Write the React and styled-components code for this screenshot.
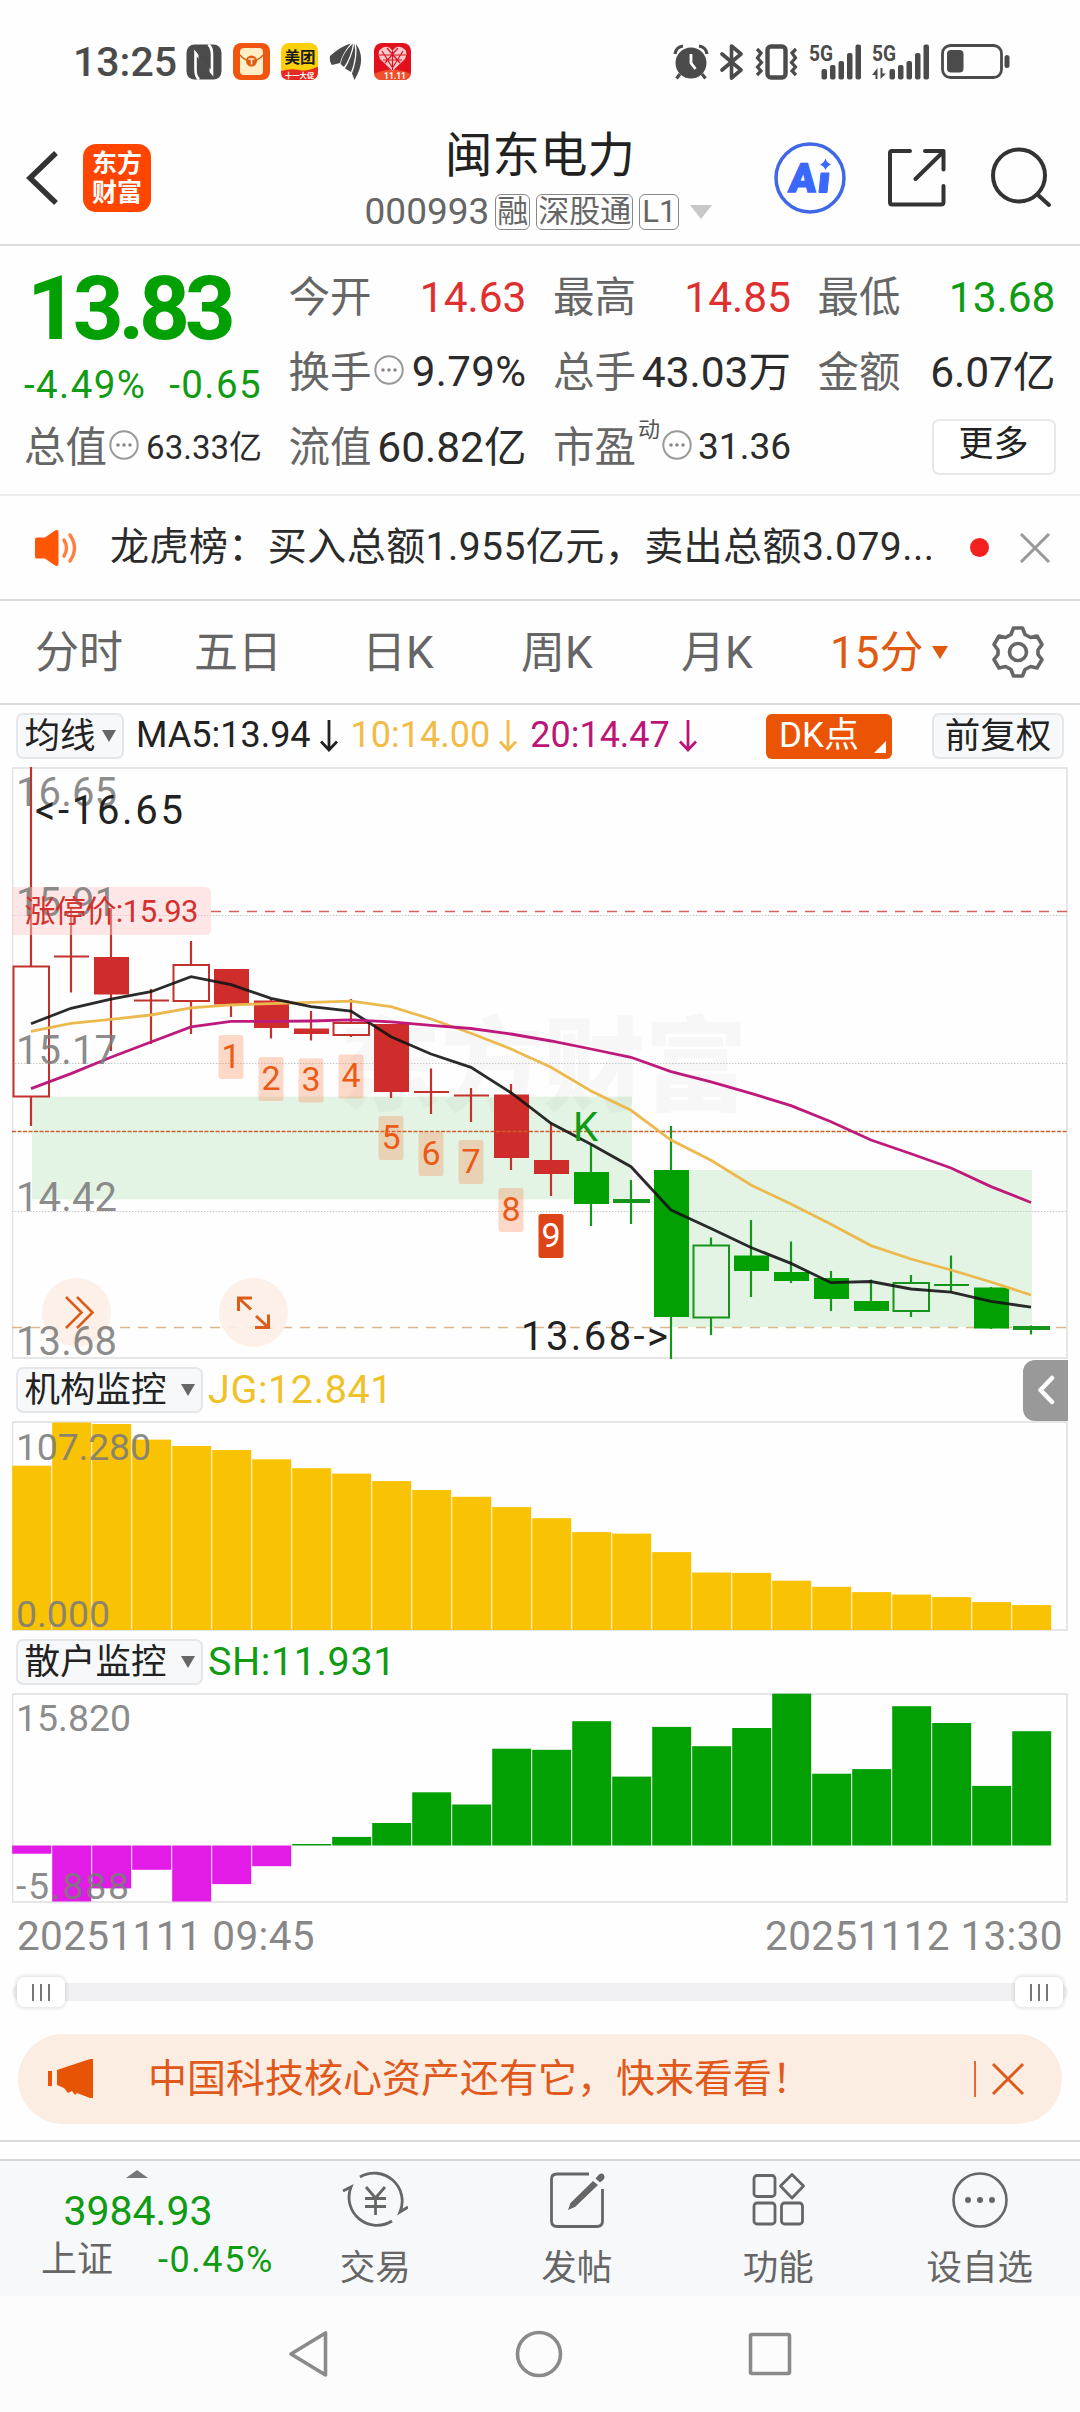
import React from 'react'
import styled, { createGlobalStyle } from 'styled-components'

const GREEN = '#02a002'
const RED = '#cf2d2b'

const PITCH = 40
const FIRST_X = 19

// o: hollow, f: filled, c: cross, k: thick cross -> [type, color, high, top, bottom, low]
const candles = [
    ['o', 'r', 0, 199.5, 329.5, 359],
    ['c', 'r', 141, 189.5, 189.5, 225.5],
    ['f', 'r', 141, 190, 227.5, 284],
    ['c', 'r', 222, 233.5, 233.5, 277],
    ['o', 'r', 174, 198, 234, 267],
    ['f', 'r', 202, 202, 237.5, 250],
    ['f', 'r', 232, 233.5, 261, 271.5],
    ['f', 'r', 244, 261.5, 267, 273.5],
    ['o', 'r', 232, 256, 268, 270],
    ['f', 'r', 257, 257, 325, 331],
    ['c', 'r', 301.5, 325, 325, 347],
    ['c', 'r', 321, 328.5, 328.5, 355],
    ['f', 'r', 317, 327.5, 391, 403],
    ['f', 'r', 356, 393, 407, 429],
    ['f', 'g', 378, 405, 437, 459],
    ['k', 'g', 413, 434, 434, 457],
    ['f', 'g', 359, 403, 550, 592],
    ['o', 'g', 470.5, 478.5, 550.5, 568],
    ['f', 'g', 453, 488.5, 504, 530],
    ['f', 'g', 474.5, 505, 514, 516],
    ['f', 'g', 504, 511, 532, 544],
    ['f', 'g', 512.5, 534, 544, 544],
    ['o', 'g', 508, 516, 544, 550],
    ['c', 'g', 488.5, 518, 518, 525],
    ['f', 'g', 520, 520.5, 561.5, 562],
    ['k', 'g', 558.5, 561, 561, 567.5],
]

const averages = [
    { color: '#ecb94f', points: [264.3, 256.3, 252.4, 248, 240.9, 237.8, 236.6, 235.4, 234.2, 239.7, 252, 266.2, 282, 300.3, 324, 343.3, 373, 393.2, 418, 437, 457.2, 478.6, 492, 503, 515, 528] },
    { color: 'rgba(20, 20, 20, 0.9)', points: [256.7, 241.3, 232.2, 224.7, 209.7, 217.6, 231.4, 239.7, 244.1, 269.7, 287, 300.3, 325.7, 356.3, 377.3, 399.7, 443, 461.6, 480.5, 496.4, 515.7, 514.5, 522, 525.2, 534.3, 540.2] },
    { color: '#be1a7c', points: [321.6, 306.6, 290.3, 275, 259.9, 254.4, 254.4, 254, 252.8, 254.8, 258.3, 261.5, 267, 274, 282, 290.3, 304.6, 314.9, 326.3, 338.6, 354.8, 373, 386.8, 401, 419.6, 435.5] },
]

const counts = [268, 290, 291.5, 287.5, 349, 365, 373, 421, 447]

const jgBars = [164.3, 207.5, 206, 190.4, 184, 180, 170.7, 161.8, 156.4, 148.9, 140, 133.2, 122.9, 111.8, 97.9, 96.4, 77.9, 57.5, 57.1, 49.3, 43.2, 37.9, 35.4, 32.9, 27.9, 25]
const shBars = [-8.2, -56, -42.9, -24.3, -56, -38.6, -20.7, 1.5, 8.6, 22.5, 53.2, 41, 96.8, 95.7, 124.3, 68.9, 118.6, 99.3, 117.5, 151.8, 71.8, 76.4, 139.3, 122.5, 59.6, 114.3]

const tabs = [
    { name: '分时', width: 159 },
    { name: '五日', width: 168 },
    { name: '日K', width: 159 },
    { name: '周K', width: 160 },
    { name: '月K', width: 149 },
]

/* ---------- Icons ---------- */

function InfoIcon(){
    return(
        <svg width="30" height="30" viewBox="0 0 30 30">
            <circle cx="15" cy="15" r="13.7" fill="none" stroke="#999" strokeWidth="2"/>
            <circle cx="9" cy="15" r="1.8" fill="#888"/>
            <circle cx="15" cy="15" r="1.8" fill="#888"/>
            <circle cx="21" cy="15" r="1.8" fill="#888"/>
        </svg>
    )
}

function DownArrow({color}){
    return(
        <svg width="20" height="32" viewBox="0 0 20 32" fill="none" stroke={color} strokeWidth="2.8">
            <path d="M10 0V30M2 21.5L10 30L18 21.5"/>
        </svg>
    )
}

function Signal({data}){
    return(
        <svg width="58" height="36" viewBox="0 0 58 36" fill="#4b4b4b">
            <text x="0" y="17" fontSize="22" fontWeight="700" textLength="24" lengthAdjust="spacingAndGlyphs">5G</text>
            <rect x={data ? 17.5 : 12.5} y="25" width="5.5" height="10.5" rx="2"/>
            <rect x={data ? 26 : 21} y="21" width="5.5" height="14.5" rx="2"/>
            <rect x={data ? 34.5 : 29.5} y="17" width="5.5" height="18.5" rx="2"/>
            <rect x={data ? 43 : 38} y="9" width="5.5" height="26.5" rx="2"/>
            <rect x={data ? 51.5 : 46.5} y="0.5" width="5.5" height="35" rx="2"/>
            {data && <path d="M5.5 24V35H3.5V31H0zM8.5 24V35L14 29.5H10.5V24z"/>}
        </svg>
    )
}

function StatusBar(){
    return(
        <StatusRow>
            <Clock>13:25</Clock>
            <StatusApps>
                {/* NFC */}
                <svg width="36" height="36" viewBox="0 0 36 36">
                    <rect x="0.5" y="0.5" width="35" height="35" rx="8" fill="#4b4b4b"/>
                    <path d="M13 35.5C9.5 32 9.500 29 9.500 26V9L26 29V11C26 7 26 4 22.500 0.500" fill="none" stroke="#fff" strokeWidth="2.6"/>
                    <path d="M12.500 8L23.500 20V29L12.500 15Z" fill="#4b4b4b"/>
                </svg>
                {/* Envelope */}
                <svg width="37" height="37" viewBox="0 0 37 37">
                    <rect width="37" height="37" rx="8" fill="#f0560f"/>
                    <rect x="7" y="5" width="23" height="27" rx="4" fill="#ffedc4"/>
                    <path d="M7 12Q12 18 18.500 18T30 12" fill="none" stroke="#c9641b" strokeWidth="1.400"/>
                    <circle cx="18.500" cy="18" r="5.500" fill="#de5b12"/>
                    <path d="M15.500 16H21.500M18.500 16V21.500" stroke="#ffedc4" strokeWidth="1.500"/>
                </svg>
                <svg width="37" height="37" viewBox="0 0 37 37">
                    <rect width="37" height="37" rx="8" fill="#fbd00a"/>
                    <path d="M0 28Q10 25 18 27T37 23.500V29Q37 37 29 37H8Q0 37 0 29Z" fill="#e72a22"/>
                    <text x="3.500" y="20" fontSize="15.500" fontWeight="700" fill="#1a1a1a">美团</text>
                    <text x="4" y="35" fontSize="7.300" fontWeight="700" fill="#fff">十一大促</text>
                </svg>
                <svg width="34" height="37" viewBox="0 0 34 37" fill="#4b4b4b">
                    <path d="M1 13Q12 3 22 0.500Q14 9 11 20L3 22Q0 18 1 13Z"/>
                    <path d="M24 0.500Q22 14 15 24L11.500 21Q14 9 24 0.500Z"/>
                    <path d="M25.500 0.500Q28 14 22 29L16 25.500Q23 14 25.500 0.500Z"/>
                    <path d="M27 1Q38 16 25.500 37L23 30.500Q29 15 27 1Z"/>
                </svg>
                <svg width="37" height="37" viewBox="0 0 37 37">
                    <rect width="37" height="37" rx="8" fill="#e2101c"/>
                    <path d="M0 31Q18 22 37 31Q36 37 29 37H8Q1 37 0 31Z" fill="#f0502d"/>
                    <path d="M18.500 28L6 16Q2 8 9 4.500Q15 2 18.500 8Q22 2 28 4.500Q35 8 31 16Z" fill="#f9c9cb"/>
                    <path d="M8 8L18 24M13 5L26 20M29 8L19 24M24 5L11 20M5 12H32M9 17H28M18.500 8V27" stroke="#d81420" strokeWidth="1.200"/>
                    <text x="10" y="35.500" fontSize="8.500" fontWeight="700" fill="#fff">11.11</text>
                </svg>
            </StatusApps>
            <StatusSystem>
                {/* Alarm */}
                <svg width="36" height="36" viewBox="0 0 36 36">
                    <circle cx="18" cy="19" r="15.500" fill="#4b4b4b"/>
                    <path d="M2 10Q3 3 10 2M34 10Q33 3 26 2M7 30L3.500 34.500M29 30L32.500 34.500" fill="none" stroke="#4b4b4b" strokeWidth="3.200"/>
                    <path d="M18 10V19L22.500 25" fill="none" stroke="#fff" strokeWidth="2.800"/>
                </svg>
                {/* Bluetooth */}
                <svg width="24" height="36" viewBox="0 0 24 36">
                    <path d="M2 10L21 26L11.500 34V2L21 10L2 26" fill="none" stroke="#4b4b4b" strokeWidth="3.600" strokeLinejoin="round" strokeLinecap="round"/>
                </svg>
                {/* Vibrate */}
                <svg width="43" height="36" viewBox="0 0 43 36" fill="none" stroke="#4b4b4b">
                    <rect x="12.500" y="2.500" width="18" height="31" rx="3.500" strokeWidth="4.400"/>
                    <path d="M2 5L6 9L2.500 14L6.500 18.500L2.500 23L6 27L2 31M41 5L37 9L40.500 14L36.500 18.500L40.500 23L37 27L41 31" strokeWidth="3.200"/>
                </svg>
                <Signal/>
                <Signal data/>
                <svg width="69" height="36" viewBox="0 0 69 36">
                    <rect x="1.500" y="1.500" width="59" height="32" rx="8" fill="none" stroke="#4b4b4b" strokeWidth="2.800"/>
                    <rect x="6" y="6" width="16.500" height="22.500" rx="4" fill="#4b4b4b"/>
                    <rect x="63.500" y="11" width="5" height="13" rx="2.500" fill="#4b4b4b"/>
                </svg>
            </StatusSystem>
        </StatusRow>
    )
}

function Header(){
    return(
        <HeaderBar>
            <HeaderLeft>
                <svg width="34" height="56" viewBox="0 0 34 56">
                    <path d="M30 3L4 28L30 53" fill="none" stroke="#333" strokeWidth="5.500"/>
                </svg>
                <Logo><span>东方</span><span>财富</span></Logo>
            </HeaderLeft>
            <HeaderTitle>
                <h1>闽东电力</h1>
                <CodeLine>
                    <span>000993</span>
                    <Tag>融</Tag>
                    <Tag>深股通</Tag>
                    <Tag>L1</Tag>
                    <svg width="22" height="14" viewBox="0 0 22 14"><path d="M0 0H22L11 14Z" fill="#c8c8c8"/></svg>
                </CodeLine>
            </HeaderTitle>
            <HeaderRight>
                <svg width="72" height="72" viewBox="0 0 72 72">
                    <circle cx="36" cy="36" r="34" fill="none" stroke="#4067e6" strokeWidth="3.500"/>
                    <text transform="translate(14 49.500) skewX(-5)" fontSize="40" fontWeight="900" fill="#3a68fb" stroke="#3a68fb" strokeWidth="1.500">A</text>
                    <path d="M47 31H55L53 50.500H45Z" fill="#3a68fb" stroke="#3a68fb" strokeWidth="1" strokeLinejoin="round"/>
                    <path d="M51.500 16.500Q53 21 57 22.500Q53 24 51.500 28Q50 24 46 22.500Q50 21 51.500 16.500Z" fill="#3a68fb"/>
                </svg>
                <svg width="60" height="60" viewBox="0 0 60 60" fill="none" stroke="#333" strokeWidth="4" strokeLinecap="round" strokeLinejoin="round">
                    <path d="M23 3H5Q3 3 3 5V54Q3 56.500 5 56.500H54Q56.500 56.500 56.500 54V38"/>
                    <path d="M38 3H56.500V21.500M56 4L28.500 31"/>
                </svg>
                <svg width="62" height="62" viewBox="0 0 62 62" fill="none" stroke="#333" strokeWidth="4" strokeLinecap="round">
                    <circle cx="29" cy="28.500" r="26"/>
                    <path d="M48 48L59 58"/>
                </svg>
            </HeaderRight>
        </HeaderBar>
    )
}

function Quote(){
    return(
        <QuoteGrid>
            <PriceCell>
                <Price>13.83</Price>
                <Change><span>-4.49%</span><span>-0.65</span></Change>
            </PriceCell>
            <Cell><label>今开</label><Value color="#e02f2f">14.63</Value></Cell>
            <Cell><label>最高</label><Value color="#e02f2f">14.85</Value></Cell>
            <Cell><label>最低</label><Value color="#0f9b12">13.68</Value></Cell>
            <Cell><label>换手</label><InfoIcon/><Value size={42} $spacing={0.4}>9.79%</Value></Cell>
            <Cell><label>总手</label><Value>43.03万</Value></Cell>
            <Cell><label>金额</label><Value>6.07亿</Value></Cell>
            <Cell><label>总值</label><InfoIcon/><Value size={33}>63.33亿</Value></Cell>
            <Cell><label>流值</label><Value>60.82亿</Value></Cell>
            <Cell><label>市盈</label><sup>动</sup><InfoIcon/><Value size={37}>31.36</Value></Cell>
            <Cell $end><MoreButton>更多</MoreButton></Cell>
        </QuoteGrid>
    )
}

function News(){
    return(
        <NewsBar>
            <svg width="46" height="38" viewBox="0 0 46 38">
                <path d="M2 10Q2 8.500 4 8.500H12L22 1.500Q25.500 0 25.500 3.500V34.500Q25.500 38 22 36.500L12 29.500H4Q2 29.500 2 28Z" fill="#ff5606"/>
                <path d="M31 11Q36 19 31 27M37 6Q46 19 37 32" fill="none" stroke="#ff7f3e" strokeWidth="3.400" strokeLinecap="round"/>
            </svg>
            <p>龙虎榜：买入总额1.955亿元，卖出总额3.079...</p>
            <RedDot/>
            <svg width="32" height="30" viewBox="0 0 32 30"><path d="M2 1L30 29M30 1L2 29" stroke="#999" strokeWidth="3"/></svg>
        </NewsBar>
    )
}

function Periods(){
    return(
        <TabBar>
            {tabs.map(tab => <Tab key={tab.name} $width={tab.width}>{tab.name}</Tab>)}
            <Tab $width={102} $active>15分</Tab>
            <svg width="16" height="13" viewBox="0 0 16 13"><path d="M0 0H16L8 13Z" fill="#e0590f"/></svg>
            <Gear width="54" height="54" viewBox="0 0 54 54" fill="none" stroke="#666" strokeWidth="3.600" strokeLinejoin="round">
                <path d="M22.500 3H31.500L34 9.500L39.500 12.500L46 11L51 19.500L47 25V29.500L51 34.500L46 43L39.500 41.500L34 44.500L31.500 51H22.500L20 44.500L14.500 41.500L8 43L3 34.500L7 29.500V25L3 19.500L8 11L14.500 12.500L20 9.500Z"/>
                <circle cx="27" cy="27" r="8.500"/>
            </Gear>
        </TabBar>
    )
}

function Averages(){
    return(
        <AverageRow>
            <Chip $width={108}>均线<i/></Chip>
            <AverageText color="#222">MA5:13.94<DownArrow color="#222"/></AverageText>
            <AverageText color="#f2bb47">10:14.00<DownArrow color="#f2bb47"/></AverageText>
            <AverageText color="#bd1478">20:14.47<DownArrow color="#bd1478"/></AverageText>
            <DkButton>DK点</DkButton>
            <Chip $width={132}>前复权</Chip>
        </AverageRow>
    )
}

function Candle({item, index}){
    const [type, tone, high, top, bottom, low] = item
    const x = FIRST_X + index * PITCH
    const color = tone === 'r' ? RED : GREEN
    const line = tone === 'r' ? '#c2322d' : '#15961a'
    return(
        <g>
            {type === 'o'
                ? <path d={`M${x} ${high}V${top}M${x} ${bottom}V${low}`} stroke={line} strokeWidth="2.200"/>
                : <path d={`M${x} ${high}V${low}`} stroke={line} strokeWidth="2.200"/>}
            {type === 'o' && <rect x={x - 17.500} y={top} width="35.500" height={bottom - top} fill="none" stroke={line} strokeWidth="2"/>}
            {type === 'f' && <rect x={x - 17} y={top} width="35" height={bottom - top} fill={color}/>}
            {type === 'c' && <path d={`M${x - 17} ${top}H${x + 18}`} stroke={line} strokeWidth="2.200"/>}
            {type === 'k' && <path d={`M${x - 18} ${top}H${x + 19}`} stroke={line} strokeWidth="4"/>}
        </g>
    )
}

function PriceChart(){
    return(
        <ChartSvg width="1056" height="592" viewBox="0 0 1056 592">
            <rect x="0.500" y="1" width="1054.500" height="590" fill="none" stroke="#e4e4e4" strokeWidth="1.800"/>
            <text x="327" y="336" fontSize="102" fontWeight="900" fill="#f7f7f7" textLength="408">东方财富</text>
            <rect x="20" y="329.500" width="600" height="103" fill="rgba(2, 160, 2, 0.1)"/>
            <rect x="660" y="403" width="360" height="157" fill="rgba(2, 160, 2, 0.1)"/>
            {[148.5, 296.5, 444.5].map(y => <path key={y} d={`M0 ${y}H1055`} stroke="#c9c9c9" strokeWidth="1" strokeDasharray="1.500 1.500"/>)}
            <path d="M199 144.500H1055" stroke="#d6605c" strokeWidth="1.500" strokeDasharray="10 8"/>
            <path d="M0 560.500H1055" stroke="#dcb98c" strokeWidth="1.500" strokeDasharray="10 8"/>
            {candles.map((item, index) => <Candle key={index} item={item} index={index}/>)}
            <path d="M0 364.500H1055" stroke="#cd5f2c" strokeWidth="1.400" strokeDasharray="4 1.500"/>
            {averages.map(line => (
                <polyline key={line.color} fill="none" stroke={line.color} strokeWidth="2.800"
                    points={line.points.map((y, i) => `${FIRST_X + i * PITCH},${y}`).join(' ')}/>
            ))}
            {counts.map((y, i) => (
                <g key={y}>
                    <rect x={206.500 + i * PITCH} y={y} width="25" height="44" rx="2.500" fill={i === 8 ? '#dd4417' : 'rgba(247, 120, 60, 0.28)'}/>
                    <text x={219 + i * PITCH} y={y + 32.500} fontSize="34" textAnchor="middle" fill={i === 8 ? '#fff' : '#ea5b16'}>{i + 1}</text>
                </g>
            ))}
            <text x="561" y="373.500" fontSize="40" fill="#0f9b12">K</text>
            {/* Floating tools */}
            <circle cx="64.500" cy="545.500" r="34.500" fill="#fdeee5" fillOpacity="0.9"/>
            <circle cx="241.500" cy="545.500" r="34.500" fill="#fdeee5" fillOpacity="0.9"/>
            <path d="M54 530L69.500 545.500L54 561M65 530L80.500 545.500L65 561" fill="none" stroke="#db5d1b" strokeWidth="2.600"/>
            <path d="M240 531H226.500V544M226.500 531L239 542.500M243 560.500H256.500V547.500M256.500 560.500L244 549" fill="none" stroke="#db5d1b" strokeWidth="3"/>
            {/* Limit price */}
            <path d="M0 120H193Q199 120 199 126V162Q199 168 193 168H0Z" fill="rgba(255, 205, 205, 0.48)"/>
            <g fontSize="40" fill="#7c7c7c" fillOpacity="0.88">
                <text x="4" y="38.500" textLength="101">16.65</text>
                <text x="4" y="148.500" textLength="101">15.91</text>
                <text x="4" y="296.500" textLength="101">15.17</text>
                <text x="4" y="444" textLength="101">14.42</text>
                <text x="4" y="587.500" textLength="101">13.68</text>
            </g>
            <text x="12.500" y="154.500" fontSize="31" fill="#d3302e" textLength="174">涨停价:15.93</text>
            <text x="23" y="56.500" fontSize="40" fill="#222" textLength="148">&lt;-16.65</text>
            <text x="509" y="582.500" fontSize="40" fill="#222" textLength="147">13.68-&gt;</text>
        </ChartSvg>
    )
}

function BarChart({bars, zero, color, negative, labels}){
    return(
        <ChartSvg width="1056" height="210" viewBox="0 0 1056 210">
            <rect x="0.500" y="1" width="1054.500" height="208" fill="none" stroke="#e4e4e4" strokeWidth="1.800"/>
            {bars.map((value, i) => (
                <rect key={i} x={i * PITCH + 0.200} width="39" y={value > 0 ? zero - value : zero} height={Math.abs(value)} fill={value > 0 ? color : negative}/>
            ))}
            {labels.map(([text, y, width]) => (
                <text key={text} x="4" y={y} fontSize="37.500" fill="#7c7c7c" fillOpacity="0.88" textLength={width}>{text}</text>
            ))}
        </ChartSvg>
    )
}

function Slider(){
    return(
        <Track>
            <Handle><i/><i/><i/></Handle>
            <Handle><i/><i/><i/></Handle>
        </Track>
    )
}

function Banner(){
    return(
        <BannerBar>
            <svg width="46" height="40" viewBox="0 0 46 40" fill="#e85405">
                <path d="M0 12H4V27H0ZM9 11L42 0H45V39H42L29 34L27 36L24 32L20 34L16 29L9 26Z"/>
            </svg>
            <p>中国科技核心资产还有它，快来看看！</p>
            <hr/>
            <svg width="34" height="34" viewBox="0 0 34 34"><path d="M2 2L32 32M32 2L2 32" stroke="#dd5a1a" strokeWidth="3"/></svg>
        </BannerBar>
    )
}

function Footer(){
    return(
        <FooterBar>
            <IndexCell>
                <svg width="22" height="8" viewBox="0 0 22 8"><path d="M11 0L22 8H0Z" fill="#777"/></svg>
                <strong>3984.93</strong>
                <div><span>上证</span><em>-0.45%</em></div>
            </IndexCell>
            <FooterItem>
                <svg width="66" height="60" viewBox="0 0 66 60" fill="none" stroke="#666" strokeWidth="2.800">
                    <path d="M18 7A28 28 0 0 1 58 42L66 37M50 51A28 28 0 0 1 9 17L1 21"/>
                    <path d="M24 17L33.500 28L43 17M33.500 28V45M23 28.500H44M23 36.500H44"/>
                </svg>
                交易
            </FooterItem>
            <FooterItem>
                <svg width="58" height="60" viewBox="0 0 58 60">
                    <path d="M41 4H9Q3.500 4 3.500 9V51Q3.500 56.500 9 56.500H49Q54.500 56.500 54.500 51V19" fill="none" stroke="#666" strokeWidth="2.800"/>
                    <path d="M45 11L50 15L27 37L20 40L22.500 33ZM47.500 8.500L51 4.500Q54.500 2.500 56 5Q57.500 8 54.500 10.500L52 12.500Z" fill="#666"/>
                </svg>
                发帖
            </FooterItem>
            <FooterItem>
                <svg width="54" height="60" viewBox="0 0 54 60" fill="none" stroke="#666" strokeWidth="2.800" strokeLinejoin="round">
                    <rect x="3" y="5.500" width="21" height="21" rx="3"/>
                    <rect x="3" y="33" width="21" height="21" rx="3"/>
                    <rect x="30.500" y="33" width="21" height="21" rx="3"/>
                    <path d="M41 4.500L52.500 16L41 28L29.500 16Z"/>
                </svg>
                功能
            </FooterItem>
            <FooterItem>
                <svg width="58" height="60" viewBox="0 0 58 60">
                    <circle cx="29" cy="30" r="26.500" fill="none" stroke="#666" strokeWidth="2.600"/>
                    <circle cx="17" cy="30" r="3" fill="#666"/>
                    <circle cx="29" cy="30" r="3" fill="#666"/>
                    <circle cx="41" cy="30" r="3" fill="#666"/>
                </svg>
                设自选
            </FooterItem>
        </FooterBar>
    )
}

function App(){
    return(
        <Page>
            <GlobalStyle/>
            <StatusBar/>
            <Header/>
            <Quote/>
            <News/>
            <Periods/>
            <Averages/>
            <PriceChart/>
            <MonitorRow>
                <Chip $width={187} $gap={14}>机构监控<i/></Chip>
                <MonitorValue color="#efc22b">JG:12.841</MonitorValue>
                <Collapse>
                    <svg width="18" height="30" viewBox="0 0 18 30"><path d="M15 3L3.500 15L15 27" fill="none" stroke="#fff" strokeWidth="4.500" strokeLinecap="round" strokeLinejoin="round"/></svg>
                </Collapse>
            </MonitorRow>
            <BarChart bars={jgBars} zero={209} color="#f9c303" labels={[['107.280', 38.5, 135], ['0.000', 206, 94]]}/>
            <MonitorRow>
                <Chip $width={187} $gap={14}>散户监控<i/></Chip>
                <MonitorValue color="#0f9b12">SH:11.931</MonitorValue>
            </MonitorRow>
            <BarChart bars={shBars} zero={152.5} color={GREEN} negative="#e21be7" labels={[['15.820', 38, 115], ['-5.888', 206, 113]]}/>
            <Dates><span>20251111 09:45</span><span>20251112 13:30</span></Dates>
            <Slider/>
            <Banner/>
            <Footer/>
            <NavBar>
                <svg width="44" height="50" viewBox="0 0 44 50"><path d="M38.500 4V46L4 25Z"/></svg>
                <svg width="50" height="50" viewBox="0 0 50 50"><circle cx="25" cy="25" r="21.500"/></svg>
                <svg width="46" height="50" viewBox="0 0 46 50"><rect x="3.500" y="5.500" width="39" height="39" rx="1.500"/></svg>
            </NavBar>
        </Page>
    )
}
export default App

/* ---------- Styles ---------- */

const GlobalStyle = createGlobalStyle`
    *{
        box-sizing: border-box;
    }
    body{
        margin: 0;
        background: #fefefe;
        font-family: Roboto, "Noto Sans CJK SC", sans-serif;
        color: #222;
    }
    svg{
        display: block;
        flex: none;
    }
    p, h1, hr{
        margin: 0;
        font-weight: 400;
    }
`;

const Page = styled.div`
    width: 1080px;
    height: 2412px;
    overflow: hidden;
    display: flex;
    flex-direction: column;
    line-height: 1.2;
    white-space: nowrap;
    > *{
        flex: none;
    }
`;

const StatusRow = styled.div`
    height: 98px;
    padding: 25px 70px 0 73px;
    display: flex;
    align-items: center;
`;

const Clock = styled.span`
    width: 113px;
    padding-top: 2px;
    font-size: 41px;
    font-weight: 500;
    color: #4b4b4b;
`;

const StatusApps = styled.div`
    display: flex;
    align-items: center;
    gap: 11px;
`;

const StatusSystem = styled.div`
    margin-left: auto;
    display: flex;
    align-items: center;
    gap: 11.3px;
    svg:nth-child(5){
        margin-left: -7px;
    }
`;

const HeaderBar = styled.div`
    height: 148px;
    display: grid;
    grid-template-columns: 340px 1fr 340px;
    border-bottom: 2px solid #dcdcdc;
`;

const HeaderLeft = styled.div`
    display: flex;
    align-items: center;
    gap: 23px;
    padding: 14px 0 0 26px;
`;

const Logo = styled.div`
    width: 68px;
    height: 68px;
    border-radius: 13px;
    background: #ff4500;
    color: #fff;
    display: flex;
    flex-direction: column;
    align-items: center;
    justify-content: center;
    font-size: 25px;
    font-weight: 700;
    line-height: 29px;
`;

const HeaderTitle = styled.div`
    display: flex;
    flex-direction: column;
    align-items: center;
    padding-top: 32px;
    h1{
        font-size: 47.5px;
        line-height: 52px;
    }
`;

const CodeLine = styled.div`
    display: flex;
    align-items: center;
    gap: 6px;
    margin: 11px 3px 0 0;
    height: 38px;
    font-size: 37px;
    color: #666;
    svg{
        margin-left: 5px;
    }
`;

const Tag = styled.span`
    height: 36px;
    padding: 0 1px;
    border: 1.5px solid #888;
    border-radius: 6px;
    font-size: 31px;
    line-height: 34px;
    &:nth-of-type(4){
        padding: 0 2px;
    }
`;

const HeaderRight = styled.div`
    display: flex;
    align-items: center;
    padding: 14px 0 0 33.5px;
    svg:nth-child(2){
        margin: 0 43px 0 41px;
    }
`;

const QuoteGrid = styled.div`
    height: 250px;
    padding: 14px 24px 0 24px;
    display: grid;
    grid-template-columns: repeat(4, 238px);
    grid-template-rows: repeat(3, 75px);
    column-gap: 26.5px;
    border-bottom: 2px solid #ededed;
`;

const PriceCell = styled.div`
    grid-row: span 2;
    color: ${GREEN};
`;

const Price = styled.div`
    height: 96px;
    padding-left: 3px;
    line-height: 98px;
    font-size: 89px;
    font-weight: 700;
    letter-spacing: -5.3px;
`;

const Change = styled.div`
    height: 58px;
    display: flex;
    align-items: center;
    justify-content: space-between;
    font-size: 38.5px;
    letter-spacing: 1.4px;
    color: #0f9b12;
`;

const Cell = styled.div`
    display: flex;
    align-items: center;
    justify-content: ${props => props.$end ? 'flex-end' : 'flex-start'};
    label{
        font-size: 41.5px;
        color: #666;
    }
    svg{
        margin-left: 2px;
        margin-bottom: 6px;
    }
    sup{
        font-size: 22px;
        line-height: 22px;
        color: #555;
        margin: 0 0 36px 2px;
    }
`;

const Value = styled.span`
    margin-left: auto;
    font-size: ${props => props.size || 42.5}px;
    letter-spacing: ${props => props.$spacing || 0}px;
    color: ${props => props.color || '#2b2b2b'};
`;

const MoreButton = styled.button`
    width: 124px;
    height: 56px;
    margin-bottom: 2px;
    padding: 0 0 3px;
    border: 2px solid #e6e8ea;
    border-radius: 7px;
    background: #fff;
    font: inherit;
    font-size: 35px;
    color: #222;
`;

const NewsBar = styled.div`
    height: 105px;
    padding: 0 29px 0 33px;
    display: flex;
    align-items: center;
    border-bottom: 2px solid #dadada;
    p{
        width: 860px;
        margin-left: 31px;
        font-size: 39px;
        letter-spacing: 0.45px;
        color: #2b2b2b;
    }
`;

const RedDot = styled.i`
    width: 19px;
    height: 19px;
    border-radius: 50%;
    background: #f3201f;
    margin-right: auto;
`;

const TabBar = styled.div`
    height: 104px;
    padding-left: 35px;
    display: flex;
    align-items: center;
    border-bottom: 2px solid #dadada;
`;

const Tab = styled.span`
    width: ${props => props.$width}px;
    padding-top: 3px;
    font-size: 44px;
    color: ${props => props.$active ? '#e0590f' : '#666'};
`;

const Gear = styled.svg`
    margin: 0 0 0 43px;
`;

const AverageRow = styled.div`
    height: 62px;
    padding: 0 16px;
    display: flex;
    align-items: center;
`;

const Chip = styled.div`
    width: ${props => props.$width}px;
    height: 46px;
    display: flex;
    align-items: center;
    justify-content: center;
    gap: ${props => props.$gap || 6}px;
    border: 2px solid #e4e6ea;
    border-radius: 7px;
    background: #f7f8fa;
    font-size: 35.5px;
    i{
        border: 7.5px solid transparent;
        border-top: 12px solid #666;
        border-bottom: 0;
    }
`;

const AverageText = styled.span`
    display: flex;
    align-items: center;
    gap: 8px;
    margin-left: 12px;
    font-size: 36px;
    color: ${props => props.color};
`;

const DkButton = styled.div`
    position: relative;
    width: 126px;
    height: 45px;
    margin: 0 40px 0 auto;
    padding-left: 13px;
    border-radius: 6px;
    background: #ea5404;
    color: #fff;
    font-size: 35px;
    line-height: 43px;
    &::after{
        content: '';
        position: absolute;
        right: 6px;
        bottom: 6px;
        border-left: 12px solid transparent;
        border-bottom: 12px solid #fff;
    }
`;

const ChartSvg = styled.svg`
    margin-left: 12px;
    overflow: hidden;
`;

const MonitorRow = styled.div`
    height: 62px;
    padding: 0 12px 0 16px;
    display: flex;
    align-items: center;
`;

const MonitorValue = styled.span`
    margin-left: 5px;
    font-size: 39.5px;
    letter-spacing: 0.6px;
    color: ${props => props.color};
`;

const Collapse = styled.div`
    width: 45px;
    height: 61px;
    margin-left: auto;
    display: flex;
    align-items: center;
    justify-content: center;
    border-radius: 12px 0 0 12px;
    background: #999;
`;

const Dates = styled.div`
    height: 65px;
    padding: 2px 17px 0 17px;
    display: flex;
    align-items: center;
    justify-content: space-between;
    font-size: 40.5px;
    letter-spacing: 0.35px;
    color: #888;
`;

const Track = styled.div`
    height: 18px;
    margin: 15px 12px 0 12px;
    padding: 0 5px;
    display: flex;
    align-items: center;
    justify-content: space-between;
    border-radius: 9px;
    background: #f1f1f4;
`;

const Handle = styled.div`
    width: 48px;
    height: 30px;
    display: flex;
    align-items: center;
    justify-content: center;
    gap: 6px;
    border-radius: 7px;
    background: #fff;
    box-shadow: 0 0 5px rgba(0, 0, 0, 0.2);
    i{
        width: 2px;
        height: 17px;
        background: #777;
    }
`;

const BannerBar = styled.div`
    height: 90px;
    margin: 33px 18px 0;
    padding: 0 37px 0 30px;
    display: flex;
    align-items: center;
    border-radius: 45px;
    background: #fcede3;
    color: #e0581a;
    p{
        margin-left: 54px;
        font-size: 39px;
    }
    hr{
        width: 2px;
        height: 36px;
        margin-left: auto;
        border: 0;
        background: #dd6c35;
    }
    svg:last-child{
        margin-left: 15px;
    }
`;

const FooterBar = styled.div`
    height: 156px;
    margin-top: 16px;
    padding-top: 19px;
    display: grid;
    grid-template-columns: 274px repeat(4, 201.5px);
    border-top: 2px solid #dadada;
    background: linear-gradient(#fefefe 17px, #d4d6d8 17px, #d4d6d8 19px, #f7f8fa 19px);
`;

const IndexCell = styled.div`
    display: flex;
    flex-direction: column;
    align-items: center;
    padding-top: 9px;
    strong{
        margin: 9px 0 0 2px;
        font-size: 41px;
        font-weight: 400;
        line-height: 49px;
        color: #0f9b12;
    }
    div{
        align-self: stretch;
        display: flex;
        justify-content: space-between;
        align-items: center;
        padding: 3px 0 0 41px;
        font-size: 36px;
        color: #666;
    }
    em{
        font-style: normal;
        letter-spacing: 1.6px;
        color: #0f9b12;
    }
`;

const FooterItem = styled.div`
    display: flex;
    flex-direction: column;
    align-items: center;
    padding: 9px 0 0 1px;
    gap: 17px;
    font-size: 35.5px;
    line-height: 42px;
    color: #666;
`;

const NavBar = styled.div`
    flex: 1 !important;
    display: flex;
    justify-content: center;
    align-items: center;
    gap: 183px;
    background: #fcfcfc;
    svg{
        fill: none;
        stroke: #8a8a8a;
        stroke-width: 3.6;
        stroke-linejoin: round;
    }
`;
